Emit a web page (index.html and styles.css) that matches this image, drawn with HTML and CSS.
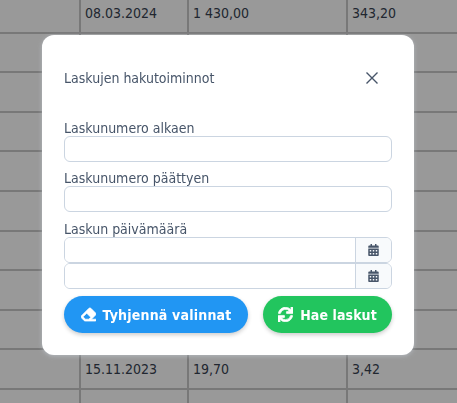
FILE: index.html
```html
<!DOCTYPE html>
<html lang="fi">
<head>
    <meta charset="UTF-8">
    <title>Laskut</title>
    <link rel="stylesheet" href="styles.css">
</head>
<body>
<div class="rows">
    <div class="row"><span></span><span>08.03.2024</span><span>1 430,00</span><span>343,20</span></div>
    <div class="row"><span></span><span></span><span></span><span></span></div>
    <div class="row"><span></span><span></span><span></span><span></span></div>
    <div class="row"><span></span><span></span><span></span><span></span></div>
    <div class="row"><span></span><span></span><span></span><span></span></div>
    <div class="row"><span></span><span></span><span></span><span></span></div>
    <div class="row"><span></span><span></span><span></span><span></span></div>
    <div class="row"><span></span><span></span><span></span><span></span></div>
    <div class="row"><span></span><span></span><span></span><span></span></div>
    <div class="row"><span></span><span>15.11.2023</span><span>19,70</span><span>3,42</span></div>
    <div class="row"><span></span><span></span><span></span><span></span></div>
</div>

<div class="overlay">
    <div class="modal">
        <div class="modal_head">
            <span class="modal_title">Laskujen hakutoiminnot</span>
            <svg class="close" viewBox="0 0 14 14"><path d="M1.5 1.5l11 11M12.5 1.5l-11 11"/></svg>
        </div>

        <label class="lbl">Laskunumero alkaen</label>
        <input class="txt" type="text">
        <label class="lbl">Laskunumero päättyen</label>
        <input class="txt" type="text">
        <label class="lbl lbl_date">Laskun päivämäärä</label>
        <div class="date">
            <input type="text">
            <span class="date_btn"><svg viewBox="0 0 448 512"><path d="M0 464c0 26.5 21.5 48 48 48h352c26.5 0 48-21.5 48-48V192H0v272zm320-196c0-6.6 5.4-12 12-12h40c6.6 0 12 5.4 12 12v40c0 6.6-5.4 12-12 12h-40c-6.6 0-12-5.4-12-12v-40zm0 128c0-6.6 5.4-12 12-12h40c6.6 0 12 5.4 12 12v40c0 6.6-5.4 12-12 12h-40c-6.6 0-12-5.4-12-12v-40zM192 268c0-6.6 5.4-12 12-12h40c6.6 0 12 5.4 12 12v40c0 6.6-5.4 12-12 12h-40c-6.6 0-12-5.4-12-12v-40zm0 128c0-6.6 5.4-12 12-12h40c6.6 0 12 5.4 12 12v40c0 6.6-5.4 12-12 12h-40c-6.6 0-12-5.4-12-12v-40zM64 268c0-6.6 5.4-12 12-12h40c6.6 0 12 5.4 12 12v40c0 6.6-5.4 12-12 12H76c-6.6 0-12-5.4-12-12v-40zm0 128c0-6.6 5.4-12 12-12h40c6.6 0 12 5.4 12 12v40c0 6.6-5.4 12-12 12H76c-6.6 0-12-5.4-12-12v-40zM400 64h-48V16c0-8.8-7.2-16-16-16h-32c-8.8 0-16 7.2-16 16v48H160V16c0-8.8-7.2-16-16-16h-32c-8.8 0-16 7.2-16 16v48H48C21.5 64 0 85.5 0 112v48h448v-48c0-26.5-21.5-48-48-48z"/></svg></span>
        </div>
        <div class="date">
            <input type="text">
            <span class="date_btn"><svg viewBox="0 0 448 512"><path d="M0 464c0 26.5 21.5 48 48 48h352c26.5 0 48-21.5 48-48V192H0v272zm320-196c0-6.6 5.4-12 12-12h40c6.6 0 12 5.4 12 12v40c0 6.6-5.4 12-12 12h-40c-6.6 0-12-5.4-12-12v-40zm0 128c0-6.6 5.4-12 12-12h40c6.6 0 12 5.4 12 12v40c0 6.6-5.4 12-12 12h-40c-6.6 0-12-5.4-12-12v-40zM192 268c0-6.6 5.4-12 12-12h40c6.6 0 12 5.4 12 12v40c0 6.6-5.4 12-12 12h-40c-6.6 0-12-5.4-12-12v-40zm0 128c0-6.6 5.4-12 12-12h40c6.6 0 12 5.4 12 12v40c0 6.6-5.4 12-12 12h-40c-6.6 0-12-5.4-12-12v-40zM64 268c0-6.6 5.4-12 12-12h40c6.6 0 12 5.4 12 12v40c0 6.6-5.4 12-12 12H76c-6.6 0-12-5.4-12-12v-40zm0 128c0-6.6 5.4-12 12-12h40c6.6 0 12 5.4 12 12v40c0 6.6-5.4 12-12 12H76c-6.6 0-12-5.4-12-12v-40zM400 64h-48V16c0-8.8-7.2-16-16-16h-32c-8.8 0-16 7.2-16 16v48H160V16c0-8.8-7.2-16-16-16h-32c-8.8 0-16 7.2-16 16v48H48C21.5 64 0 85.5 0 112v48h448v-48c0-26.5-21.5-48-48-48z"/></svg></span>
        </div>

        <div class="btns">
            <button class="btn btn_clear"><svg viewBox="0 0 512 512"><path d="M497.941 273.941c18.745-18.745 18.745-49.137 0-67.882l-160-160c-18.745-18.745-49.136-18.746-67.883 0l-256 256c-18.745 18.745-18.745 49.137 0 67.882l96 96A48.004 48.004 0 0 0 144 480h356c6.627 0 12-5.373 12-12v-40c0-6.627-5.373-12-12-12H355.883l142.058-142.059zm-302.627-62.627l137.373 137.373L265.373 416H150.628l-80-80 124.686-124.686z"/></svg>Tyhjennä valinnat</button>
            <button class="btn btn_fetch"><svg viewBox="0 0 512 512"><path d="M440.65 12.57l4 82.77A247.16 247.16 0 0 0 255.83 8C134.73 8 33.91 94.92 12.29 209.82A12 12 0 0 0 24.09 224h49.05a12 12 0 0 0 11.67-9.26 175.91 175.91 0 0 1 317-56.94l-101.46-4.86a12 12 0 0 0-12.57 12v47.41a12 12 0 0 0 12 12H500a12 12 0 0 0 12-12V12a12 12 0 0 0-12-12h-47.37a12 12 0 0 0-11.98 12.57zM255.83 432a175.61 175.61 0 0 1-146-77.8l101.8 4.87a12 12 0 0 0 12.57-12v-47.4a12 12 0 0 0-12-12H12a12 12 0 0 0-12 12V500a12 12 0 0 0 12 12h47.35a12 12 0 0 0 12-12.6l-4.15-82.57A247.17 247.17 0 0 0 255.83 504c121.11 0 221.93-86.92 243.55-201.82a12 12 0 0 0-11.8-14.18h-49.05a12 12 0 0 0-11.67 9.26A175.86 175.86 0 0 1 255.83 432z"/></svg>Hae laskut</button>
        </div>
    </div>
</div>
</body>
</html>
```

FILE: styles.css
```css
*{
    margin: 0;
    padding: 0;
    box-sizing: border-box;
}
html{
    overflow: hidden;
}
body{
    height: 403px;
    overflow: hidden;
    background: #fff;
    font-family: "DejaVu Sans", sans-serif;
    font-stretch: condensed;
    font-size: 14px;
    color: #475569;
}

/* taulukko taustalla */
.rows{
    height: 409px;
    margin-top: -6px;
    overflow: hidden;
}
.row{
    display: grid;
    grid-template-columns: 81px 108px 159px 1fr;
    height: 39.6px;
    border-bottom: 2px solid #c8c8c8;
}
.row span{
    padding: 8px 0 0 4px;
    border-right: 2px solid #c8c8c8;
    color: #374151;
    line-height: 22px;
}
.row span:last-child{
    border-right: 0;
}

.overlay{
    position: fixed;
    top: 0;
    left: 0;
    right: 0;
    bottom: 0;
    background: rgba(0, 0, 0, .4);
    padding: 35px 43px 0 42px;
}
.modal{
    height: 320px;
    padding: 0 22px;
    background: #fff;
    border-radius: 12px;
    box-shadow: 0 1px 4px rgba(203, 213, 225, .5);
}
.modal_head{
    display: flex;
    justify-content: space-between;
    align-items: center;
    height: 85px;
}
.modal_title{
    font-size: 14px;
}
.close{
    width: 14px;
    height: 14px;
    margin-right: 13px;
}
.close path{
    fill: none;
    stroke: #475569;
    stroke-width: 1.4;
}

.lbl{
    display: block;
    height: 16px;
    line-height: 16px;
    font-size: 14px;
}
.lbl_date{
    height: 17px;
    padding-top: 1px;
}
.txt{
    display: block;
    width: 100%;
    height: 26px;
    margin-bottom: 8px;
    border: 1px solid #cbd5e1;
    border-radius: 6px;
    background: #fff;
}
.date{
    display: flex;
    height: 26px;
    border: 1px solid #cbd5e1;
    border-radius: 6px;
    overflow: hidden;
}
.date input{
    flex: 1;
    min-width: 0;
    border: 0;
    outline: 0;
}
.date_btn{
    display: flex;
    align-items: center;
    justify-content: center;
    width: 36px;
    background: #f8fafc;
    border-left: 1px solid #cbd5e1;
}
.date_btn svg{
    width: 11px;
    height: 12px;
    fill: #475569;
}

.btns{
    display: flex;
    justify-content: space-between;
    margin-top: 7px;
}
.btn{
    display: flex;
    align-items: center;
    justify-content: center;
    height: 37px;
    border: 0;
    border-radius: 19px;
    color: #fff;
    font-family: "DejaVu Sans", sans-serif;
    font-stretch: condensed;
    font-size: 14px;
    font-weight: 700;
    box-shadow: 0 2px 4px rgba(0, 0, 0, .2);
}
.btn svg{
    width: 15px;
    height: 15px;
    margin-right: 7px;
    fill: #fff;
    stroke: #fff;
    stroke-width: 24;
}
.btn_clear{
    width: 184px;
    background: #2196f3;
    letter-spacing: .2px;
}
.btn_fetch{
    width: 129px;
    background: #22c55e;
    letter-spacing: .1px;
}
```
